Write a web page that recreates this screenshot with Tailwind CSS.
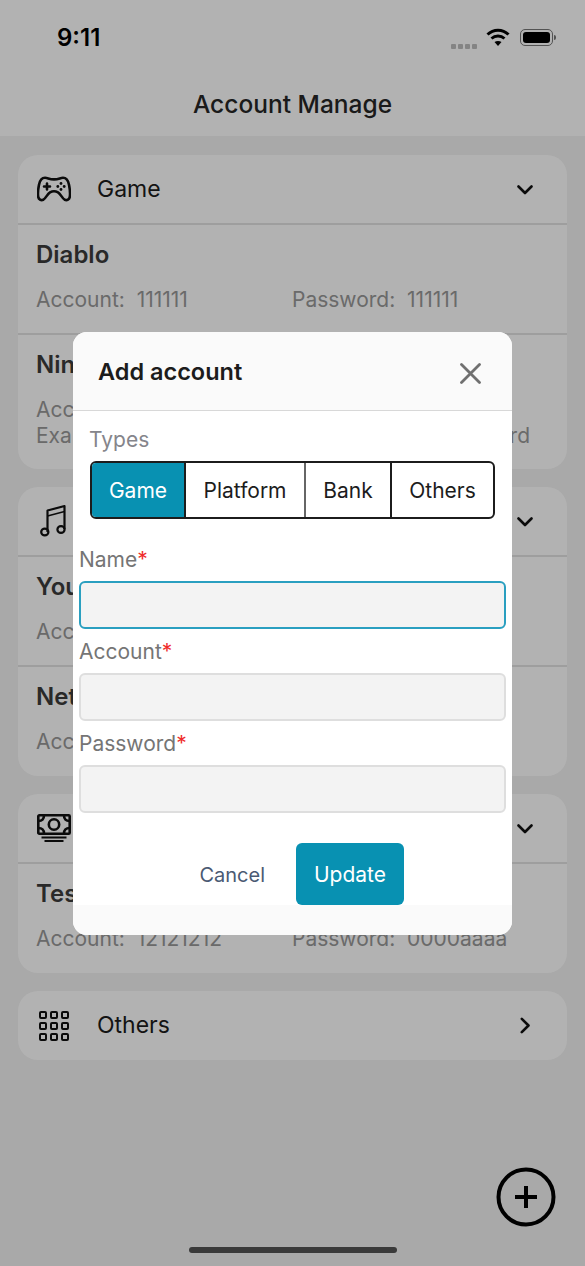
<!DOCTYPE html>
<html lang="en">
<head>
  <meta charset="UTF-8">
  <meta name="viewport" content="width=device-width, initial-scale=1.0">
  <title>Account Manage</title>
  <script src="https://cdn.jsdelivr.net/npm/@tailwindcss/browser@4"></script>
</head>
<body class="bg-[#f2f2f2] font-['Inter',sans-serif]">
  <div class="relative w-[585px] h-[1266px] overflow-hidden">
    <!-- page -->
    <header class="h-[136px] bg-white">
      <div class="h-[74px] flex items-center justify-between pl-[57px] pr-[29px]">
        <span class="text-[24px] font-semibold text-black mt-[2px]">9:11</span>
        <div class="flex items-center gap-[9px]">
          <div class="flex gap-[2px] mt-[18px]">
            <span class="w-[5px] h-[5px] rounded-[1px] bg-[#bdbdbd]"></span>
            <span class="w-[5px] h-[5px] rounded-[1px] bg-[#bdbdbd]"></span>
            <span class="w-[5px] h-[5px] rounded-[1px] bg-[#bdbdbd]"></span>
            <span class="w-[5px] h-[5px] rounded-[1px] bg-[#bdbdbd]"></span>
          </div>
          <svg class="w-[24px] h-[18px]" viewBox="0 0 24 18" fill="none" stroke="#000" stroke-width="3">
            <path d="M1.500 6.500C7.500 .8 16.500 .8 22.500 6.500"/>
            <path d="M5.500 10.500C9.200 7.200 14.800 7.200 18.500 10.500"/>
            <path d="M12 18l-3.500-4c2-1.500 5-1.500 7 0z" fill="#000" stroke="none"/>
          </svg>
          <div class="flex items-center gap-[1px] ml-[1px]">
            <div class="w-[33px] h-[17px] rounded-[5px] border border-[#777] p-[2px]">
              <div class="w-full h-full rounded-[3px] bg-black"></div>
            </div>
            <span class="w-[2px] h-[5px] rounded-r-sm bg-[#777]"></span>
          </div>
        </div>
      </div>
      <h1 class="h-[60px] flex items-center justify-center text-[24.5px] font-medium text-[#262626]">Account Manage</h1>
    </header>

    <main class="px-[18px] pt-[19px] flex flex-col gap-[18px]">
      <!-- Game -->
      <section class="bg-white rounded-[20px] h-[314px] overflow-hidden">
        <div class="h-[70px] flex items-center pl-[19px] pr-[34px] border-b-2 border-[#e2e2e2]">
          <svg class="w-[34px] h-[26px] mr-[26px] shrink-0" viewBox="0 0 34 26" fill="none" stroke="#111" stroke-width="2.600" stroke-linejoin="round" stroke-linecap="round">
            <path d="M8 1.800c3 0 4 1.600 9 1.600s6-1.600 9-1.600c3.500 0 5 2 6 7 .8 4 1.300 9 .8 12-.4 2.500-2.800 4-5 3-2.600-1.200-4-5.800-6.800-7.500-2.500-1.300-5.500-1.300-8 0C10.200 18 8.800 22.600 6.200 23.800c-2.200 1-4.600-.5-5-3-.5-3 0-8 .8-12 1-5 2.500-7 6-7z"/>
            <path d="M10 7.500v6M7 10.500h6"/>
            <g fill="#111" stroke="none"><circle cx="24" cy="7.500" r="1.400"/><circle cx="20.800" cy="10.500" r="1.400"/><circle cx="27.200" cy="10.500" r="1.400"/><circle cx="24" cy="13.500" r="1.400"/></g>
          </svg>
          <span class="text-[23px] text-[#1c1c1c] flex-1">Game</span>
          <svg class="w-[16px] h-[10px] mt-[1px]" viewBox="0 0 16 10" fill="none" stroke="#111" stroke-width="2.600" stroke-linecap="round" stroke-linejoin="round"><path d="M1.500 1.500L8 8l6.500-6.500"/></svg>
        </div>
        <div class="h-[110px] px-[18px] pt-[14px] border-b-2 border-[#e2e2e2]">
          <h3 class="text-[24px] leading-[32px] font-semibold text-[#3c3c3c]">Diablo</h3>
          <div class="flex mt-[15px] text-[21px] leading-[28px] text-[#989898]">
            <span class="w-[256px]">Account:&nbsp; 111111</span>
            <span>Password:&nbsp; 111111</span>
          </div>
        </div>
        <div class="px-[18px] pt-[14px]">
          <h3 class="text-[24px] leading-[32px] font-semibold text-[#3c3c3c]">Nintendo</h3>
          <div class="flex mt-[16px] text-[21px] leading-[26px] text-[#989898]">
            <span class="w-[256px]">Account:&nbsp; 111111<br>Example</span>
            <span class="w-[238px]">Password:&nbsp; 111111<br><span class="block text-right">Example word</span></span>
          </div>
        </div>
      </section>

      <!-- Music -->
      <section class="bg-white rounded-[20px] h-[289px] overflow-hidden">
        <div class="h-[70px] flex items-center pl-[22px] pr-[34px] border-b-2 border-[#e2e2e2]">
          <svg class="w-[26px] h-[33px] mr-[31px] -mt-[1px] shrink-0" viewBox="0 0 26 33" fill="none" stroke="#111" stroke-width="2.200" stroke-linejoin="round">
            <path d="M7.500 28V6.500L24.500 2v23"/>
            <path d="M7.500 12L24.500 7.500" stroke-width="1.500"/>
            <ellipse cx="4.800" cy="28" rx="3.600" ry="3.300"/>
            <ellipse cx="21" cy="25.500" rx="3.600" ry="3.300"/>
          </svg>
          <span class="text-[23px] text-[#1c1c1c] flex-1">Music</span>
          <svg class="w-[16px] h-[10px] mt-[1px]" viewBox="0 0 16 10" fill="none" stroke="#111" stroke-width="2.600" stroke-linecap="round" stroke-linejoin="round"><path d="M1.500 1.500L8 8l6.500-6.500"/></svg>
        </div>
        <div class="h-[110px] px-[18px] pt-[14px] border-b-2 border-[#e2e2e2]">
          <h3 class="text-[24px] leading-[32px] font-semibold text-[#3c3c3c]">YouTube</h3>
          <div class="mt-[15px] text-[21px] leading-[28px] text-[#989898]">Account:&nbsp; 111111</div>
        </div>
        <div class="px-[18px] pt-[14px]">
          <h3 class="text-[24px] leading-[32px] font-semibold text-[#3c3c3c]">Netflix</h3>
          <div class="mt-[15px] text-[21px] leading-[28px] text-[#989898]">Account:&nbsp; 111111</div>
        </div>
      </section>

      <!-- Bank -->
      <section class="bg-white rounded-[20px] h-[179px] overflow-hidden">
        <div class="h-[70px] flex items-center pl-[19px] pr-[34px] border-b-2 border-[#e2e2e2]">
          <svg class="w-[34px] h-[28px] mr-[26px] shrink-0" viewBox="0 0 34 28" fill="none" stroke="#111" stroke-width="2.600">
            <rect x="1.300" y="1.300" width="31.400" height="18.400" rx="1"/>
            <circle cx="17" cy="10.500" r="5.200"/>
            <path d="M1.500 7C5 7 7 5 7 1.500M27 1.500C27 5 29 7 32.500 7M1.500 14C5 14 7 16 7 19.500M27 19.500C27 16 29 14 32.500 14"/>
            <path d="M4.500 23.500h25M7.500 27h19" stroke-width="2"/>
          </svg>
          <span class="text-[23px] text-[#1c1c1c] flex-1">Bank</span>
          <svg class="w-[16px] h-[10px] mt-[1px]" viewBox="0 0 16 10" fill="none" stroke="#111" stroke-width="2.600" stroke-linecap="round" stroke-linejoin="round"><path d="M1.500 1.500L8 8l6.500-6.500"/></svg>
        </div>
        <div class="px-[18px] pt-[14px]">
          <h3 class="text-[24px] leading-[32px] font-semibold text-[#3c3c3c]">Test</h3>
          <div class="flex mt-[15px] text-[21px] leading-[28px] text-[#989898]">
            <span class="w-[256px]">Account:&nbsp; 12121212</span>
            <span>Password:&nbsp; 0000aaaa</span>
          </div>
        </div>
      </section>

      <!-- Others -->
      <section class="bg-white rounded-[20px] h-[69px] flex items-center pl-[21px] pr-[36px]">
        <div class="w-[30px] grid grid-cols-3 gap-[3px] mr-[28px] shrink-0">
          <span class="h-[8px] rounded-[2px] border-[2.500px] border-[#111]"></span>
          <span class="h-[8px] rounded-[2px] border-[2.500px] border-[#111]"></span>
          <span class="h-[8px] rounded-[2px] border-[2.500px] border-[#111]"></span>
          <span class="h-[8px] rounded-[2px] border-[2.500px] border-[#111]"></span>
          <span class="h-[8px] rounded-[2px] border-[2.500px] border-[#111]"></span>
          <span class="h-[8px] rounded-[2px] border-[2.500px] border-[#111]"></span>
          <span class="h-[8px] rounded-[2px] border-[2.500px] border-[#111]"></span>
          <span class="h-[8px] rounded-[2px] border-[2.500px] border-[#111]"></span>
          <span class="h-[8px] rounded-[2px] border-[2.500px] border-[#111]"></span>
        </div>
        <span class="text-[23px] text-[#1c1c1c] flex-1">Others</span>
        <svg class="w-[11px] h-[17px]" viewBox="0 0 11 17" fill="none" stroke="#111" stroke-width="2.600" stroke-linecap="round" stroke-linejoin="round"><path d="M1.800 1.800L8.500 8.500l-6.700 6.700"/></svg>
      </section>
    </main>

    <!-- dim layer -->
    <div class="absolute inset-0 bg-black/30"></div>

    <!-- floating add button -->
    <svg class="absolute left-[496px] top-[1167px] w-[60px] h-[60px]" viewBox="0 0 60 60" fill="none" stroke="#000" stroke-width="4">
      <circle cx="30" cy="30" r="27.500"/>
      <path d="M30 19v22M19 30h22"/>
    </svg>

    <!-- home indicator -->
    <div class="absolute left-[189px] top-[1247px] w-[208px] h-[6px] rounded-full bg-[#3a3a3a]"></div>

    <!-- modal -->
    <div class="absolute left-[73px] top-[332px] w-[439px] h-[603px] rounded-[14px] bg-white overflow-hidden flex flex-col">
      <div class="h-[79px] shrink-0 bg-[#fafafa] border-b border-[#d8d8d8] flex items-center justify-between pl-[25px] pr-[31px]">
        <h2 class="text-[23.500px] font-semibold text-[#1c1c1c] mt-[2px]">Add account</h2>
        <svg class="w-[21px] h-[21px] mt-[5px]" viewBox="0 0 21 21" fill="none" stroke="#707070" stroke-width="2.800" stroke-linecap="round"><path d="M1.500 1.500l18 18M19.500 1.500l-18 18"/></svg>
      </div>
      <div class="px-[6px]">
        <div class="px-[11px] pt-[15px]">
          <div class="text-[21px] leading-[28px] text-[#85858b] mb-[7px] -ml-[1px]">Types</div>
          <div class="h-[58px] flex rounded-[6px] border-2 border-[#1c1c1c] text-[21px] text-[#1c1c1c] overflow-hidden">
            <button class="w-[94px] pt-[2px] bg-[#0891b2] text-white border-r-2 border-[#1c1c1c]">Game</button>
            <button class="w-[120px] pt-[2px] border-r-2 border-[#666]">Platform</button>
            <button class="w-[86px] pt-[2px] border-r-2 border-[#1c1c1c]">Bank</button>
            <button class="flex-1 pt-[2px]">Others</button>
          </div>
        </div>
        <div class="mt-[26px] flex flex-col">
          <label class="h-[28px] text-[21px] leading-[30px] text-[#757575] mb-[8px]">Name<span class="text-[#ef2b2b]">*</span></label>
          <input class="h-[48px] rounded-[6px] bg-[#f3f3f3] border-2 border-[#2a9fc0] outline-none">
          <label class="h-[28px] text-[21px] leading-[30px] text-[#757575] mt-[8px] mb-[8px]">Account<span class="text-[#ef2b2b]">*</span></label>
          <input class="h-[48px] rounded-[6px] bg-[#f3f3f3] border-2 border-[#dedede] outline-none">
          <label class="h-[28px] text-[21px] leading-[30px] text-[#757575] mt-[8px] mb-[8px]">Password<span class="text-[#ef2b2b]">*</span></label>
          <input class="h-[48px] rounded-[6px] bg-[#f3f3f3] border-2 border-[#dedede] outline-none">
        </div>
      </div>
      <div class="mt-[30px] h-[62px] shrink-0 flex items-center justify-end pr-[108px]">
        <button class="text-[20px] pt-[2px] text-[#4a5a73] mr-[31px]">Cancel</button>
        <button class="w-[108px] h-[62px] pt-[2px] rounded-[6px] bg-[#0891b2] text-white text-[21px]">Update</button>
      </div>
      <div class="flex-1 bg-[#fafafa]"></div>
    </div>
  </div>
</body>
</html>
